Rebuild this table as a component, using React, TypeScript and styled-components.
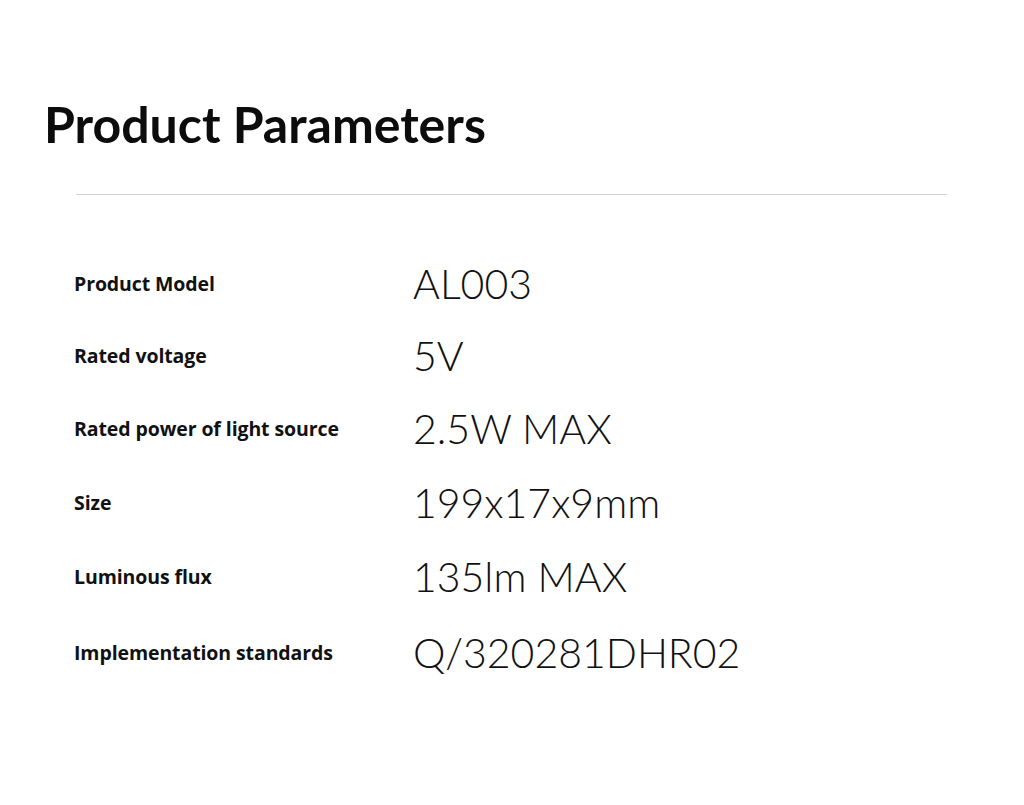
import React from "react";
import styled, { createGlobalStyle } from "styled-components";

const GlobalStyle = createGlobalStyle`
    html, body {
        margin: 0;
        padding: 0;
        background: #ffffff;
    }
    body {
        font-family: "Lato", "Noto Sans", sans-serif;
        color: #111111;
    }
`;

const Page = styled.div`
    width: 1024px;
    height: 805px;
    background: #ffffff;
    box-sizing: border-box;
    padding-top: 94px;
    overflow: hidden;
`;

const Title = styled.h1`
    margin: 0 0 0 44px;
    font-family: "Lato", sans-serif;
    font-weight: 700;
    font-size: 50px;
    line-height: 60px;
    color: #0c0c0c;
`;

const Divider = styled.hr`
    margin: 40px 0 0 76px;
    width: 871px;
    border: none;
    border-top: 1px solid #d2d2d2;
`;

const Table = styled.div`
    display: flex;
    flex-direction: column;
    margin-top: 52px;
`;

const Row = styled.div<{ $h: number }>`
    display: grid;
    grid-template-columns: 339px 1fr;
    align-items: center;
    height: ${props => props.$h}px;
    padding-left: 74px;
`;

const Label = styled.div`
    font-family: "Open Sans", sans-serif;
    font-weight: 700;
    font-size: 19.5px;
    letter-spacing: -0.1px;
    color: #111111;
`;

const Value = styled.div`
    font-family: "Lato", sans-serif;
    font-weight: 300;
    font-size: 41px;
    color: #111111;
`;

const params = [
    { label: "Product Model", value: "AL003", h: 72 },
    { label: "Rated voltage", value: "5V", h: 72 },
    { label: "Rated power of light source", value: "2.5W MAX", h: 74 },
    { label: "Size", value: "199x17x9mm", h: 74 },
    { label: "Luminous flux", value: "135lm MAX", h: 74 },
    { label: "Implementation standards", value: "Q/320281DHR02", h: 78 },
];

export default function App() {
    return (
        <Page>
            <GlobalStyle />
            <Title>Product Parameters</Title>
            <Divider />
            <Table>
                {params.map(p => (
                    <Row key={p.label} $h={p.h}>
                        <Label>{p.label}</Label>
                        <Value>{p.value}</Value>
                    </Row>
                ))}
            </Table>
        </Page>
    );
}
